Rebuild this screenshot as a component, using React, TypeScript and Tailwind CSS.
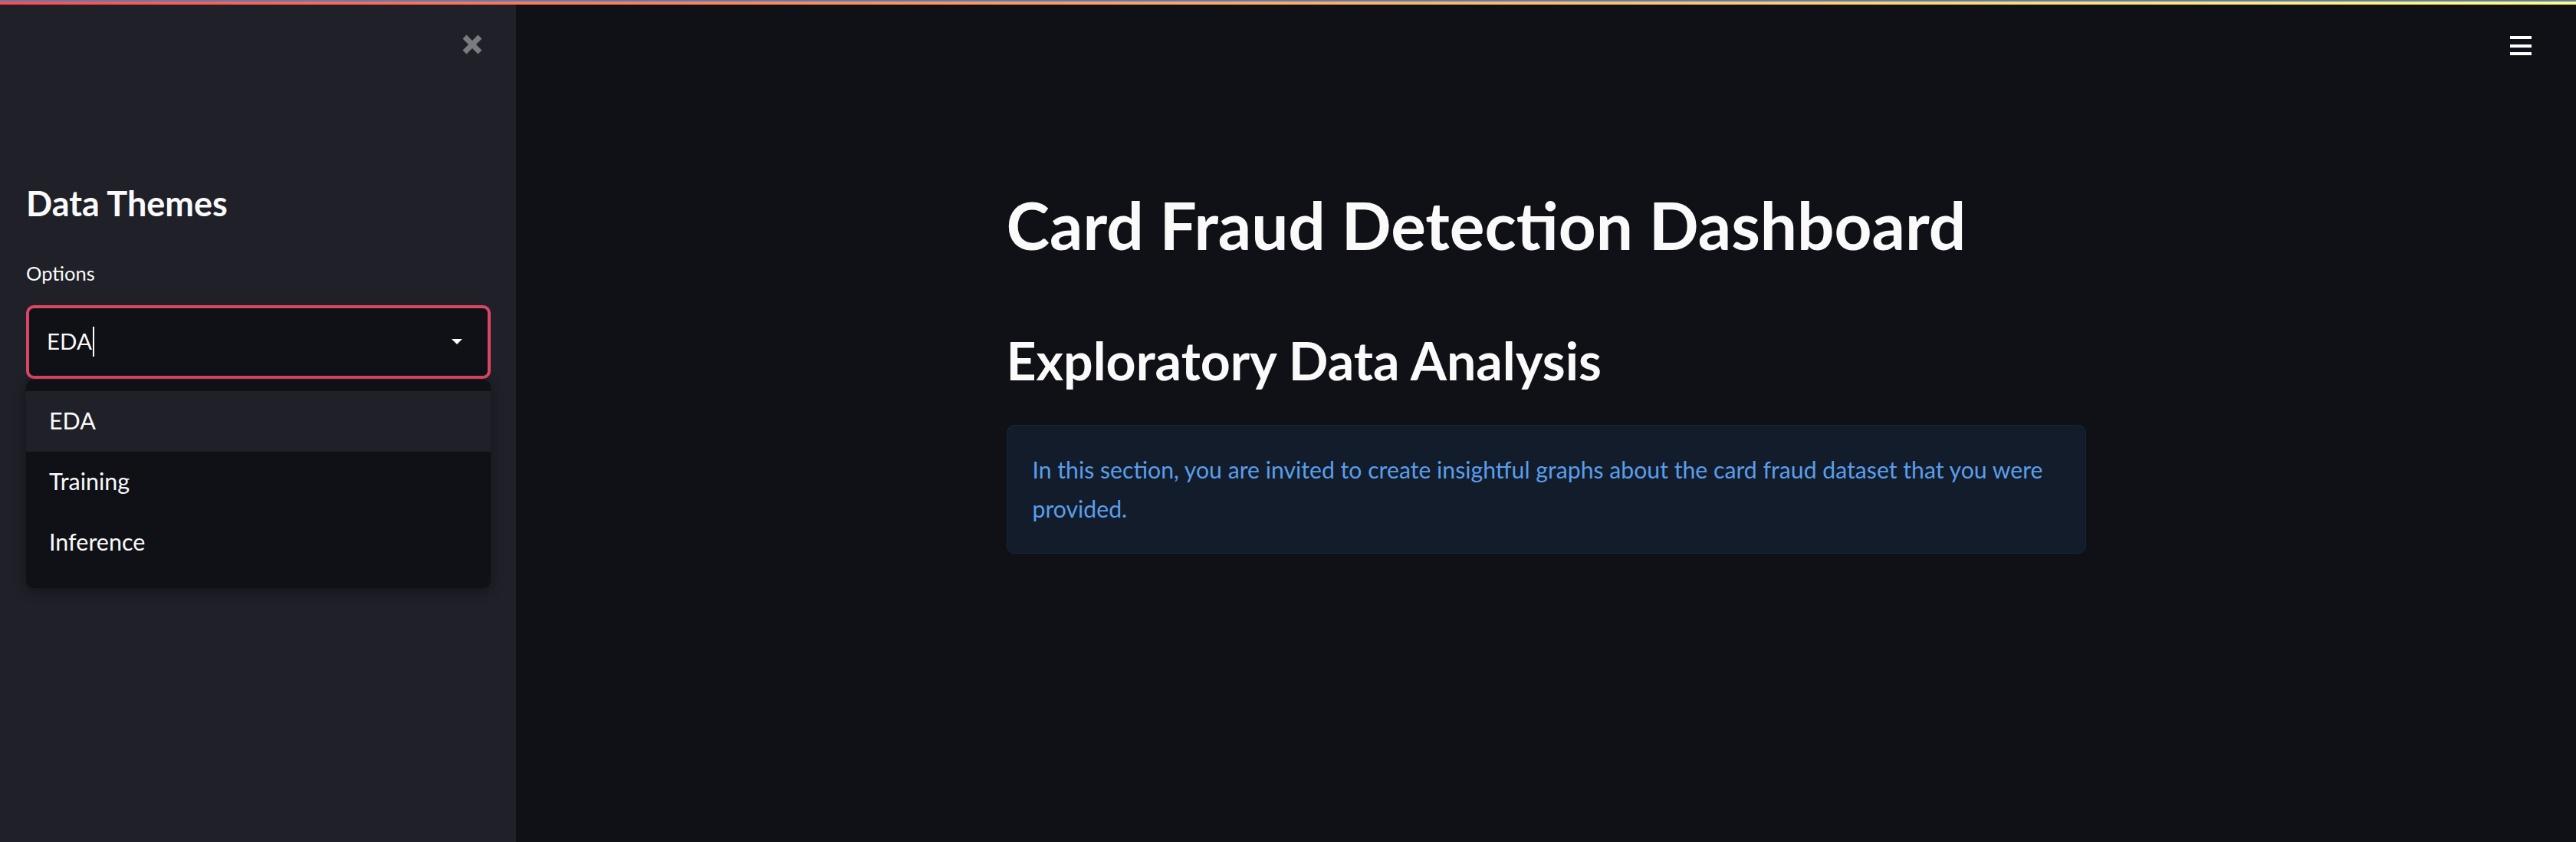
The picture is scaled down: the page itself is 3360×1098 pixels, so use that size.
import React from 'react'

const font = { fontFamily: 'Lato, "Noto Sans", sans-serif' }

function CloseIcon() {
  return (
    <svg width="30" height="30" viewBox="0 0 30 30" className="text-[#7a7b81]">
      <path d="M5 5 L25 25 M25 5 L5 25" stroke="currentColor" strokeWidth="7" strokeLinecap="butt" />
    </svg>
  )
}

function Hamburger() {
  return (
    <div className="flex w-[28px] flex-col gap-[6.5px]">
      <div className="h-[4px] w-full bg-white" />
      <div className="h-[4px] w-full bg-white" />
      <div className="h-[4px] w-full bg-white" />
    </div>
  )
}

const options = ['EDA', 'Training', 'Inference']

function Sidebar() {
  return (
    <aside className="flex h-full w-[673px] shrink-0 flex-col bg-[#1f2028] pl-[34px] pr-[33px]">
      <div className="flex h-[104px] items-center justify-end pr-[9px]">
        <CloseIcon />
      </div>
      <h2 className="mt-[128px] text-[45px] font-bold leading-[1.2] text-[#fafafa]">Data Themes</h2>
      <label className="mt-[49px] text-[25.5px] leading-[1.2] text-[#fafafa]">Options</label>
      <div className="mt-[26px] flex h-[96px] items-center rounded-[10px] border-[4px] border-[#dc4664] bg-[#0f1116] pl-[23px] pr-[33px]">
        <span className="text-[29.5px] text-[#fafafa]">EDA</span>
        <span className="ml-[1px] h-[39px] w-[2px] bg-white" />
        <div className="flex-1" />
        <div className="h-0 w-0 border-l-[7px] border-r-[7px] border-t-[7px] border-l-transparent border-r-transparent border-t-white" />
      </div>
      <ul className="mt-[1px] rounded-[10px] bg-[#0f1116] pb-[20px] pt-[15px] shadow-[0_4px_16px_rgba(0,0,0,0.35)]">
        {options.map((o, i) => (
          <li
            key={o}
            className={`flex h-[79px] items-center pl-[30px] text-[30.5px] text-[#fafafa] ${i === 0 ? 'bg-[#1f2028]' : ''}`}
          >
            {o}
          </li>
        ))}
      </ul>
    </aside>
  )
}

function Main() {
  return (
    <main className="relative flex h-full flex-1 justify-center bg-[#0f1116]">
      <div className="absolute right-[58px] top-[41px]">
        <Hamburger />
      </div>
      <div className="flex w-[1472px] flex-col px-[32px] pt-[236px]">
        <h1 className="text-[85.5px] font-bold leading-[1.2] text-[#fafafa]">Card Fraud Detection Dashboard</h1>
        <h2 className="mt-[84px] text-[68px] font-bold leading-[1.2] text-[#fafafa]">Exploratory Data Analysis</h2>
        <div className="mt-[44px] rounded-[10px] border border-[#17273a] bg-[#131c2b] px-[33px] py-[32px]">
          <p className="text-[30.2px] leading-[51px] text-[#5a9eea]">
            In this section, you are invited to create insightful graphs about the card fraud dataset that you were provided.
          </p>
        </div>
      </div>
    </main>
  )
}

export default function App() {
  return (
    <div className="flex h-[1098px] w-[3360px] flex-col overflow-hidden bg-[#0f1116]" style={font}>
      <div className="h-[2px] w-full bg-[#5b7db3]" />
      <div className="h-[4px] w-full bg-gradient-to-r from-[#ff4b4b] to-[#fffd80]" />
      <div className="flex min-h-0 flex-1">
        <Sidebar />
        <Main />
      </div>
    </div>
  )
}
